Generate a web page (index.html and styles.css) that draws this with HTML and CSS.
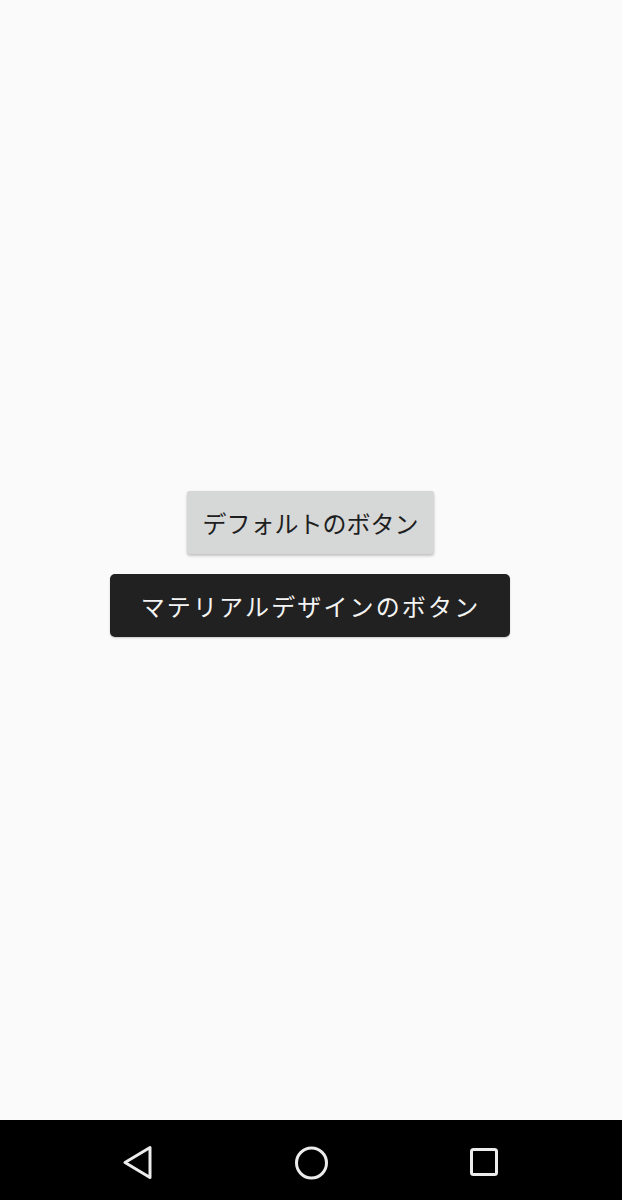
FILE: index.html
```html
<!DOCTYPE html>
<html lang="ja">
<head>
<meta charset="utf-8">
<link rel="stylesheet" href="styles.css">
</head>
<body>
<div class="screen">
  <main class="content">
    <button class="btn btn-default">デフォルトのボタン</button>
    <button class="btn btn-material">マテリアルデザインのボタン</button>
  </main>
  <nav class="navbar">
    <svg class="nav-icon" width="40" height="40" viewBox="0 0 40 40">
      <path d="M32 4.5 L32 34.5 L7 19.5 Z" fill="none" stroke="#ececec" stroke-width="3" stroke-linejoin="round"/>
    </svg>
    <svg class="nav-icon" width="40" height="40" viewBox="0 0 40 40">
      <circle cx="20.5" cy="20" r="15" fill="none" stroke="#ececec" stroke-width="3"/>
    </svg>
    <svg class="nav-icon" width="40" height="40" viewBox="0 0 40 40">
      <rect x="7.5" y="6.5" width="25" height="25" rx="2" fill="none" stroke="#ececec" stroke-width="3"/>
    </svg>
  </nav>
</div>
</body>
</html>
```

FILE: styles.css
```css
* { box-sizing: border-box; }
html, body {
  margin: 0;
  padding: 0;
  background: #fafafa;
}
.screen {
  width: 622px;
  height: 1200px;
  display: flex;
  flex-direction: column;
  font-family: "Noto Sans CJK JP", "Noto Sans", sans-serif;
}
.content {
  flex: 1;
  display: flex;
  flex-direction: column;
  align-items: center;
  justify-content: center;
  gap: 20px;
  padding-top: 8px;
}
.btn {
  font-family: "Noto Sans CJK JP", "Noto Sans", sans-serif;
  font-size: 24px;
  height: 63px;
  border: none;
  line-height: 1;
  cursor: pointer;
}
.btn-default {
  background: #d6d7d7;
  color: #1e1e1e;
  padding: 0 15px 0 16px;
  margin-right: 2px;
  border-radius: 3px;
  box-shadow: 0 2px 3px rgba(0, 0, 0, 0.22), 0 0 1px rgba(0, 0, 0, 0.12);
}
.btn-material {
  background: #212121;
  color: #f4f4f4;
  letter-spacing: 2.14px;
  padding: 0 30px 0 31px;
  margin-right: 2px;
  border-radius: 5px;
  box-shadow: 0 1px 2px rgba(0, 0, 0, 0.2);
}
.navbar {
  height: 80px;
  background: #000;
  display: flex;
  align-items: center;
  justify-content: center;
  gap: 133px;
  padding-top: 6px;
}
.nav-icon {
  display: block;
}
```
